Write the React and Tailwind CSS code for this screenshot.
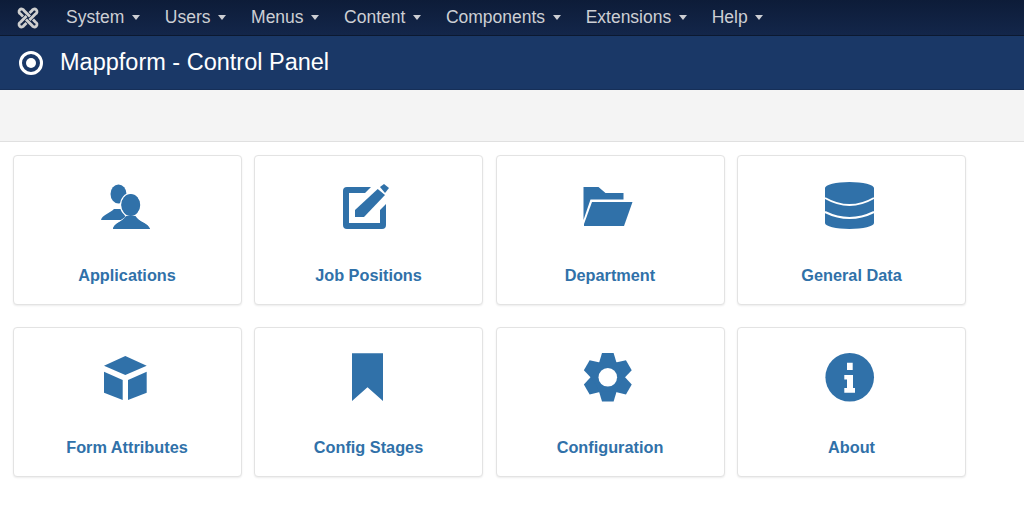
import React from 'react';

const MENU = ['System', 'Users', 'Menus', 'Content', 'Components', 'Extensions', 'Help'];

const JoomlaLogo = () => (
  <svg width="22" height="22" viewBox="0 0 22 22" fill="none" className="text-[#cfcfcf]">
    {[0, 90, 180, 270].map((a) => (
      <g key={a} transform={`rotate(${a} 11 11)`}>
        <path d="M6 9.5 L3.6 7 A2.6 2.6 0 1 1 7 3.6 L13 9.5" stroke="currentColor" strokeWidth="2.8" />
      </g>
    ))}
  </svg>
);

const TargetIcon = () => (
  <svg width="26" height="26" viewBox="0 0 26 26">
    <circle cx="13" cy="13" r="10.5" fill="none" stroke="white" strokeWidth="3" />
    <circle cx="13" cy="13" r="5" fill="white" />
  </svg>
);

const Caret = () => (
  <span className="ml-[7.5px] inline-block w-0 h-0 border-x-[4.5px] border-x-transparent border-t-[5px] border-t-[#cdcfd4]" />
);

// icons are drawn on a 50x50 box, some run a little past the edge
const UsersIcon = () => (
  <>
    <ellipse cx="16.5" cy="14" rx="8" ry="9.5" />
    <path d="M-1 40 C0 35 8 33 12 29 L21 29 L24 40 Z" />
    <g stroke="white" strokeWidth="2.5" paintOrder="stroke">
      <ellipse cx="28.7" cy="25" rx="9.5" ry="11" />
      <path d="M11 49 C12 43 20 42 24 38 L33.5 38 C37 42 46 43 48 49 Z" />
    </g>
    <ellipse cx="28.7" cy="25" rx="9" ry="10.5" />
    <path d="M11 49 C12 43 20 42 24 36 L33.5 36 C37 42 46 43 48 49 Z" />
  </>
);

const EditIcon = () => (
  <>
    <path d="M27 7 H3 A4 4 0 0 0 -1 11 V45 A4 4 0 0 0 3 49 H38 A4 4 0 0 0 42 45 V24 L36 30 V43 H5 V13 H21 Z" />
    <path d="M11 30 L33.7 9 L41 15 L20 37 H11 Z" />
    <path d="M36 7 L40 4 L45 8 L41 13 Z" />
  </>
);

const FolderIcon = () => (
  <>
    <path d="M-1.5 7 H13.5 L20.5 13 H38.5 V19.5 H5.5 L-1.5 40 Z" />
    <path d="M7 22 H47.5 L39 46 H-1 V44 Z" />
  </>
);

const DatabaseIcon = () => (
  <>
    <path d="M-2 8 A24.5 6 0 0 1 47 8 V43 A24.5 6 0 0 1 -2 43 Z" />
    <path d="M-2 18 Q22.5 32 47 18 M-2 32 Q22.5 44 47 32" fill="none" stroke="white" strokeWidth="2" />
  </>
);

const CubeIcon = () => (
  <>
    <path d="M23.3 4 L44.7 13.7 L23.3 23 L2 13.7 Z" />
    <path d="M2 19.7 L20.7 28 V48 L2 40.7 Z" />
    <path d="M26 28 L44.7 19.7 V40.7 L26 48 Z" />
  </>
);

const BookmarkIcon = () => <path d="M8 1.3 H39 V49 L23.5 35.3 L8 49 Z" />;

const GearIcon = () => (
  <>
    <circle cx="22.8" cy="25.3" r="17" />
    {[0, 60, 120, 180, 240, 300].map((a) => (
      <path key={a} transform={`rotate(${a} 22.8 25.3)`} d="M14 11 L17 1 H28.6 L31.6 11 Z" />
    ))}
    <circle cx="22.8" cy="25.3" r="9.3" fill="white" />
  </>
);

const InfoIcon = () => (
  <>
    <circle cx="22.7" cy="25.3" r="24.3" />
    <path fill="white" d="M20 10.7 H25.7 V18 H20 Z M17.3 23 H26 V36 H28 V40.7 H17.3 V36 H20 V27.500 H17.3 Z" />
  </>
);

const CARDS = [
  { label: 'Applications', Icon: UsersIcon },
  { label: 'Job Positions', Icon: EditIcon },
  { label: 'Department', Icon: FolderIcon },
  { label: 'General Data', Icon: DatabaseIcon },
  { label: 'Form Attributes', Icon: CubeIcon },
  { label: 'Config Stages', Icon: BookmarkIcon },
  { label: 'Configuration', Icon: GearIcon },
  { label: 'About', Icon: InfoIcon },
];

const Card = ({ label, Icon }) => (
  <a className="h-[150px] flex flex-col items-center bg-white border border-[#e3e3e3] rounded-[4px] shadow-[0_1px_2px_rgba(0,0,0,0.08)] pt-[24px]">
    <svg width="50" height="50" viewBox="0 0 50 50" fill="#3071a9" className="overflow-visible">
      <Icon />
    </svg>
    <span className="mt-[33px] text-[16.3px] leading-[24px] font-bold text-[#3071a9]">{label}</span>
  </a>
);

export default function App() {
  return (
    <div className="min-h-[526px] bg-white font-['Liberation_Sans',Arial,sans-serif]">
      {/* Top menu */}
      <nav className="h-[36px] flex items-center bg-gradient-to-b from-[#0d1c38] to-[#13264a] border-b border-[#0c1930]">
        <div className="ml-[17px] w-[49px] flex-none">
          <JoomlaLogo />
        </div>
        <ul className="flex gap-[25px] text-[17.5px] text-[#cdcfd4]">
          {MENU.map((item) => (
            <li key={item} className="flex items-center">
              {item}
              <Caret />
            </li>
          ))}
        </ul>
      </nav>

      {/* Title bar */}
      <header className="h-[54px] flex items-center bg-[#1a3867] border-b border-[#162f58] text-white">
        <div className="ml-[18px] w-[42px] flex-none">
          <TargetIcon />
        </div>
        <h1 className="text-[23.5px]">Mappform - Control Panel</h1>
      </header>

      {/* Toolbar */}
      <div className="h-[52px] bg-[#f4f4f4] border-b border-[#e0e0e0]" />

      {/* Dashboard cards */}
      <div className="grid grid-cols-[repeat(4,229px)] gap-x-[12.500px] gap-y-[22px] pl-[12.500px] pt-[13px]">
        {CARDS.map((card) => (
          <Card key={card.label} {...card} />
        ))}
      </div>
    </div>
  );
}
